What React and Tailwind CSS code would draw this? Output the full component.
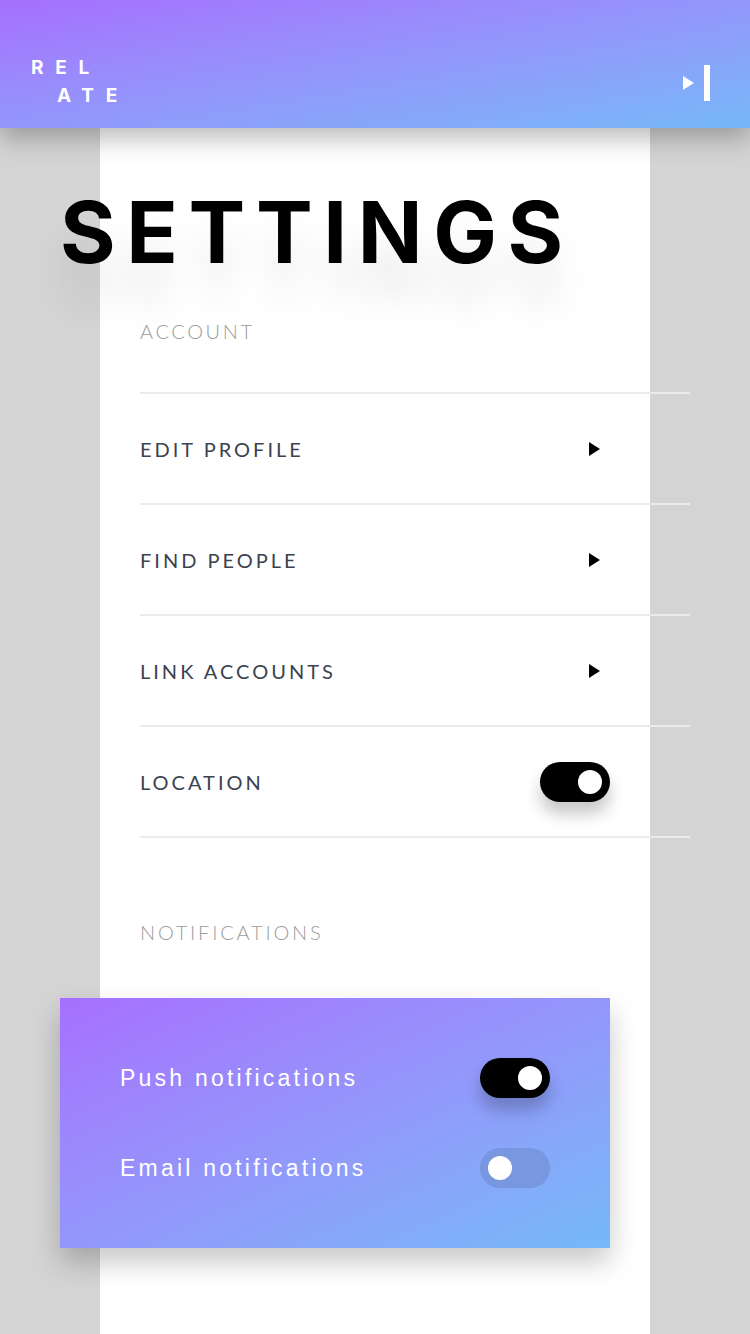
import React, { useState } from 'react';

const Toggle = ({ on, onChange, dark }) => (
  <button
    onClick={onChange}
    className={`relative flex h-[40px] w-[70px] items-center rounded-full px-[8px] ${
      on
        ? 'justify-end bg-black shadow-[0_12px_16px_rgba(0,0,0,0.22)]'
        : dark
        ? 'justify-start bg-[#7897e0]'
        : 'justify-start bg-[#e5e5e5]'
    }`}
  >
    <span className="block h-[24px] w-[24px] rounded-full bg-white" />
  </button>
);

const Arrow = () => (
  <svg width="11" height="14" viewBox="0 0 11 14">
    <polygon points="0,0 11,7 0,14" fill="#000" />
  </svg>
);

const App = () => {
  const [location, setLocation] = useState(true);
  const [push, setPush] = useState(true);
  const [email, setEmail] = useState(false);

  const rows = ['EDIT PROFILE', 'FIND PEOPLE', 'LINK ACCOUNTS'];

  return (
    <div className="min-h-[1334px] overflow-hidden bg-[#d4d4d4]">
      {/* Header */}
      <header className="relative z-10 flex h-[128px] items-end justify-between bg-gradient-to-br from-[#a56ffe] to-[#75b8f7] pb-[27px] pl-[31px] pr-[40px] shadow-[0_10px_24px_rgba(0,0,0,0.28)]">
        <div
          className="-mb-[9px] text-[19px] font-bold leading-[28px] tracking-[0.62em] text-white"
          style={{ fontFamily: 'Inter, "Open Sans", sans-serif' }}
        >
          <div>REL</div>
          <div className="pl-[26px]">ATE</div>
        </div>
        <div className="flex items-center gap-[10px]">
          <svg width="11" height="14" viewBox="0 0 11 14">
            <polygon points="0,0 11,7 0,14" fill="#fff" />
          </svg>
          <span className="block h-[36px] w-[6px] bg-white" />
        </div>
      </header>

      {/* Panel */}
      <main
        className="ml-[100px] min-h-[1206px] w-[550px] bg-white"
        style={{ fontFamily: 'Lato, "Open Sans", sans-serif' }}
      >
        <h1
          className="-ml-[40px] pt-[57px] text-[85px] font-bold leading-[96px] tracking-[0.125em] text-black [text-shadow:0_40px_36px_rgba(0,0,0,0.09)]"
          style={{ fontFamily: 'Inter, "Open Sans", sans-serif' }}
        >
          SETTINGS
        </h1>

        <div className="w-[590px] pl-[40px]">
          <div className="pt-[38px] pb-[49px] text-[20px] font-light leading-[24px] tracking-[0.13em] text-[#9b9b9b]">
            ACCOUNT
          </div>

          <div className="border-t-2 border-[#ebebeb]">
            {rows.map((r) => (
              <div
                key={r}
                className="flex h-[111px] items-center justify-between border-b-2 border-[#ebebeb] pr-[90px]"
              >
                <span className="text-[20px] leading-[24px] tracking-[0.15em] text-[#3b4250]">{r}</span>
                <Arrow />
              </div>
            ))}
            <div className="flex h-[111px] items-center justify-between border-b-2 border-[#ebebeb] pr-[80px]">
              <span className="text-[20px] leading-[24px] tracking-[0.15em] text-[#3b4250]">LOCATION</span>
              <Toggle on={location} onChange={() => setLocation(!location)} />
            </div>
          </div>

          <div className="pt-[82px] pb-[54px] text-[20px] font-light leading-[24px] tracking-[0.14em] text-[#9b9b9b]">
            NOTIFICATIONS
          </div>
        </div>

        <section
          className="-ml-[40px] flex h-[250px] w-[550px] flex-col justify-center gap-[50px] bg-gradient-to-br from-[#a66ffe] to-[#74b9f7] pl-[60px] pr-[60px] shadow-[0_14px_26px_rgba(0,0,0,0.22)]"
          style={{ fontFamily: '"Liberation Sans", Arial, sans-serif' }}
        >
          <div className="flex items-center justify-between">
            <span className="text-[23px] tracking-[0.14em] text-white">Push notifications</span>
            <Toggle on={push} onChange={() => setPush(!push)} dark />
          </div>
          <div className="flex items-center justify-between">
            <span className="text-[23px] tracking-[0.14em] text-white">Email notifications</span>
            <Toggle on={email} onChange={() => setEmail(!email)} dark />
          </div>
        </section>
      </main>
    </div>
  );
};

export default App;
